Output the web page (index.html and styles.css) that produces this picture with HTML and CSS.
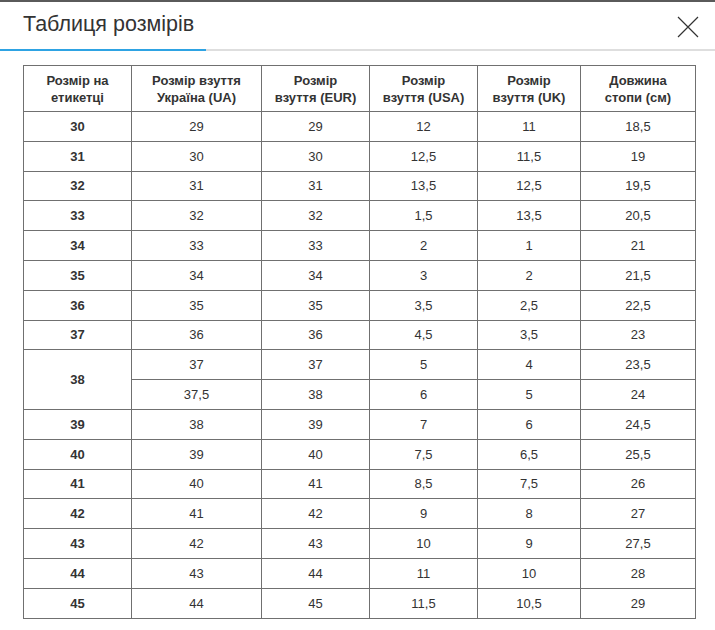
FILE: index.html
```html
<!DOCTYPE html>
<html lang="uk">
<head>
<meta charset="utf-8">
<title>Таблиця розмірів</title>
<link rel="stylesheet" href="styles.css">
</head>
<body>
<div class="modal">
  <div class="modal-head">
    <h1 class="modal-title">Таблиця розмірів</h1>
    <button class="close" aria-label="Закрити">
      <svg width="22" height="22" viewBox="0 0 22 22"><path d="M1 1 L21 21 M21 1 L1 21" stroke="#333" stroke-width="1.2" fill="none"/></svg>
    </button>
  </div>
  <div class="tabline"><span class="tabline-active"></span></div>
  <div class="modal-body">
    <table class="sizes">
      <colgroup>
        <col class="c1"><col class="c2"><col class="c3"><col class="c4"><col class="c5"><col class="c6">
      </colgroup>
      <thead>
        <tr>
          <th>Розмір на<br>етикетці</th>
          <th>Розмір взуття<br>Україна (UA)</th>
          <th>Розмір<br>взуття (EUR)</th>
          <th>Розмір<br>взуття (USA)</th>
          <th>Розмір<br>взуття (UK)</th>
          <th>Довжина<br>стопи (см)</th>
        </tr>
      </thead>
      <tbody>
        <tr><td class="b">30</td><td>29</td><td>29</td><td>12</td><td>11</td><td>18,5</td></tr>
        <tr><td class="b">31</td><td>30</td><td>30</td><td>12,5</td><td>11,5</td><td>19</td></tr>
        <tr><td class="b">32</td><td>31</td><td>31</td><td>13,5</td><td>12,5</td><td>19,5</td></tr>
        <tr><td class="b">33</td><td>32</td><td>32</td><td>1,5</td><td>13,5</td><td>20,5</td></tr>
        <tr><td class="b">34</td><td>33</td><td>33</td><td>2</td><td>1</td><td>21</td></tr>
        <tr><td class="b">35</td><td>34</td><td>34</td><td>3</td><td>2</td><td>21,5</td></tr>
        <tr><td class="b">36</td><td>35</td><td>35</td><td>3,5</td><td>2,5</td><td>22,5</td></tr>
        <tr><td class="b">37</td><td>36</td><td>36</td><td>4,5</td><td>3,5</td><td>23</td></tr>
        <tr><td class="b" rowspan="2">38</td><td>37</td><td>37</td><td>5</td><td>4</td><td>23,5</td></tr>
        <tr><td>37,5</td><td>38</td><td>6</td><td>5</td><td>24</td></tr>
        <tr><td class="b">39</td><td>38</td><td>39</td><td>7</td><td>6</td><td>24,5</td></tr>
        <tr><td class="b">40</td><td>39</td><td>40</td><td>7,5</td><td>6,5</td><td>25,5</td></tr>
        <tr><td class="b">41</td><td>40</td><td>41</td><td>8,5</td><td>7,5</td><td>26</td></tr>
        <tr><td class="b">42</td><td>41</td><td>42</td><td>9</td><td>8</td><td>27</td></tr>
        <tr><td class="b">43</td><td>42</td><td>43</td><td>10</td><td>9</td><td>27,5</td></tr>
        <tr><td class="b">44</td><td>43</td><td>44</td><td>11</td><td>10</td><td>28</td></tr>
        <tr><td class="b">45</td><td>44</td><td>45</td><td>11,5</td><td>10,5</td><td>29</td></tr>
      </tbody>
    </table>
  </div>
</div>
</body>
</html>
```

FILE: styles.css
```css
html, body {
  margin: 0;
  padding: 0;
  background: #fff;
}
body {
  font-family: "Liberation Sans", Arial, sans-serif;
  color: #333;
}
.modal {
  border-top: 2px solid #5a5a5a;
  width: 715px;
  height: 628px;
  box-sizing: border-box;
}
.modal-head {
  display: flex;
  align-items: center;
  justify-content: space-between;
  height: 47px;
  padding: 0 16px 0 23px;
}
.modal-title {
  margin: 0;
  font-size: 21.5px;
  font-weight: normal;
  color: #333;
  padding-bottom: 2px;
}
.close {
  border: 0;
  background: none;
  padding: 0;
  width: 22px;
  height: 22px;
  margin-top: 2px;
  cursor: pointer;
}
.close svg { display: block; }
.tabline {
  height: 2px;
  background: #dedede;
  display: flex;
}
.tabline-active {
  width: 206px;
  background: #2ea3e3;
}
.modal-body {
  padding: 14px 0 0 23px;
}
.sizes {
  border-collapse: collapse;
  table-layout: fixed;
  width: 672px;
  font-size: 13px;
  color: #333;
}
.c1 { width: 108px; }
.c2 { width: 130px; }
.c3 { width: 108px; }
.c4 { width: 108px; }
.c5 { width: 103px; }
.c6 { width: 115px; }
.sizes th, .sizes td {
  border: 1px solid #707070;
  text-align: center;
  padding: 0;
}
.sizes th {
  font-weight: bold;
  height: 45px;
  line-height: 17px;
}
.sizes td {
  height: 28.8px;
  line-height: 15px;
}
.sizes td.b { font-weight: bold; }
```
